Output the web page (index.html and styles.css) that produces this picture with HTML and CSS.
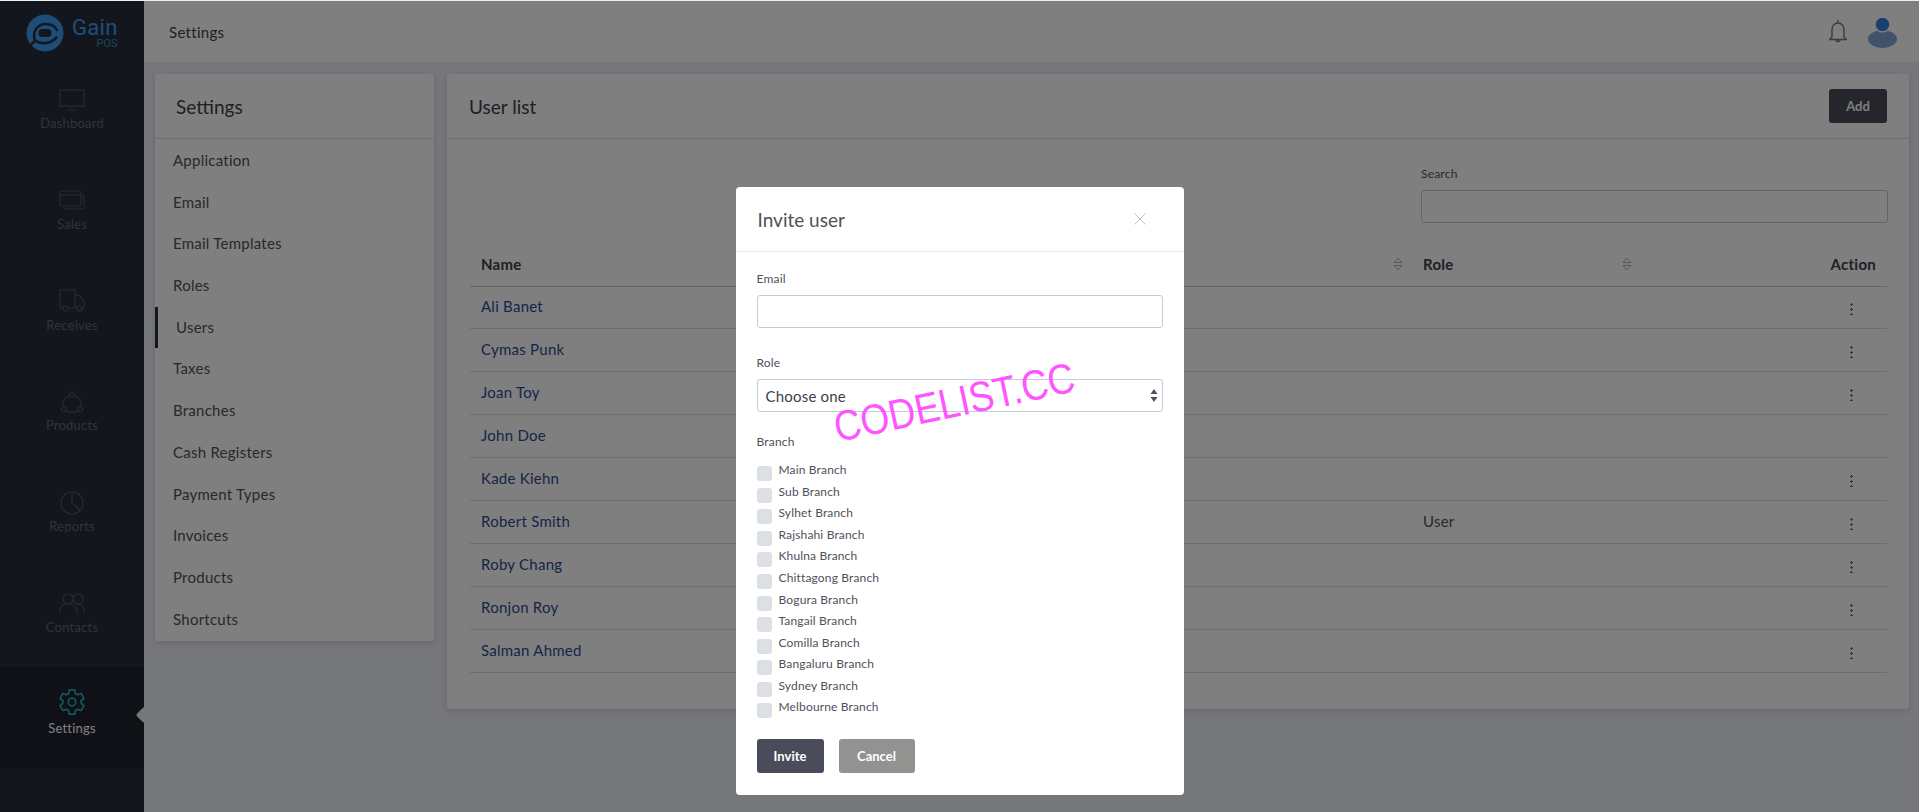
FILE: index.html
```html
<!DOCTYPE html>
<html lang="en">
<head>
<meta charset="utf-8">
<title>Settings - Gain POS</title>
<link rel="stylesheet" href="styles.css">
</head>
<body>
<div class="app">
  <aside class="sidebar">
    <div class="brand">
      <svg class="brand-mark" viewBox="0 0 38 38"><circle cx="19" cy="19" r="18.500" fill="#3c9cf0"/><path class="logo-gap" d="M3 33l6-6.500C5.500 17 12 10 20 10c5.500 0 9.500 2.500 11.500 7M9 26.500c5 4 17 4 22-4"/><rect x="12.500" y="15" width="13" height="8" rx="4" fill="#282c3a"/></svg>
      <div class="brand-text"><span class="brand-name">Gain</span><span class="brand-sub">POS</span></div>
    </div>
    <nav class="nav">
      <a class="nav-item"><svg class="nav-icon" viewBox="0 0 26 26"><rect x="1" y="3" width="24" height="16"/><path d="M13 19v3M7 23h12"/></svg><span>Dashboard</span></a>
      <a class="nav-item"><svg class="nav-icon" viewBox="0 0 26 26"><rect x="1" y="3" width="21" height="15" rx="2"/><path d="M1 7h21M22 7h1a2 2 0 0 1 2 2v10a2 2 0 0 1-2 2H7a2 2 0 0 1-2-2v-1"/></svg><span>Sales</span></a>
      <a class="nav-item"><svg class="nav-icon" viewBox="0 0 26 26"><path d="M4 19H1V1h15v18H9M16 6h4l5 6v7h-2M16 19h2"/><circle cx="6.500" cy="19.500" r="2.500"/><circle cx="20.500" cy="19.500" r="2.500"/></svg><span>Receives</span></a>
      <a class="nav-item"><svg class="nav-icon" viewBox="0 0 26 26"><circle cx="13" cy="5.500" r="2.500"/><circle cx="5" cy="20" r="2.500"/><circle cx="21" cy="20" r="2.500"/><path d="M10.500 6.500a10 10 0 0 0-6.500 11M15.500 6.500a10 10 0 0 1 6.500 11M7.500 21.500a10 10 0 0 0 11 0"/></svg><span>Products</span></a>
      <a class="nav-item"><svg class="nav-icon" viewBox="0 0 26 26"><circle cx="13" cy="13" r="11"/><path d="M13 2v11l8 7"/></svg><span>Reports</span></a>
      <a class="nav-item"><svg class="nav-icon" viewBox="0 0 26 26"><circle cx="9" cy="8" r="5"/><circle cx="19" cy="8" r="5"/><path d="M0 22c0-6 4-9 9-9s9 3 9 9M17 13c5 0 9 3 9 9"/></svg><span>Contacts</span></a>
      <a class="nav-item nav-active"><svg class="nav-icon gear" viewBox="0 0 24 24"><circle cx="12" cy="12" r="3.500"/><polygon points="8.820,4.120 9.410,.8 14.590,.8 15.180,4.120 17.230,5.300 20.410,4.160 23,8.640 20.420,10.820 20.420,13.180 23,15.360 20.410,19.840 17.230,18.700 15.180,19.880 14.590,23.200 9.410,23.200 8.820,19.880 6.770,18.700 3.590,19.840 1,15.360 3.580,13.180 3.580,10.820 1,8.640 3.590,4.160 6.770,5.300"/></svg><span>Settings</span></a>
    </nav>
  </aside>
  <div class="main">
    <header class="topbar">
      <span class="topbar-title">Settings</span>
      <div class="topbar-actions">
        <svg class="bell" viewBox="0 0 18 24"><path d="M9 0v2.500M3 17V9a6 6 0 0 1 12 0v8l2.500 2.500H.5L3 17zM7 19.500a2 2 0 0 0 4 0"/></svg>
        <svg class="avatar" viewBox="0 0 29 30"><ellipse cx="14.500" cy="21" rx="14.500" ry="9" fill="#82a4d8"/><circle cx="14.500" cy="6.500" r="7.500" fill="#3a7ce0" stroke="#fff" stroke-width="1.500"/></svg>
      </div>
    </header>
    <div class="content">
      <section class="card side-card">
        <h2 class="card-title side-title">Settings</h2>
        <ul class="menu">
          <li>Application</li><li>Email</li><li>Email Templates</li><li>Roles</li>
          <li class="menu-active">Users</li><li>Taxes</li><li>Branches</li><li>Cash Registers</li>
          <li>Payment Types</li><li>Invoices</li><li>Products</li><li>Shortcuts</li>
        </ul>
      </section>
      <section class="card list-card">
        <div class="list-head">
          <h2 class="card-title">User list</h2>
          <button class="btn btn-dark">Add</button>
        </div>
        <div class="list-body">
          <div class="search">
            <label class="label">Search</label>
            <div class="input"></div>
          </div>
          <table class="table">
            <colgroup><col class="c-name"><col class="c-mail"><col class="c-role"><col></colgroup>
            <thead>
              <tr>
                <th>Name</th>
                <th class="sort"><svg class="sort-icon" viewBox="0 0 10 14"><path d="M1 5.500 5 1l4 4.500zM1 8.500 5 13l4-4.500z"/></svg></th>
                <th class="sort">Role<svg class="sort-icon" viewBox="0 0 10 14"><path d="M1 5.500 5 1l4 4.500zM1 8.500 5 13l4-4.500z"/></svg></th>
                <th class="right">Action</th>
              </tr>
            </thead>
            <tbody>
              <tr><td class="link">Ali Banet</td><td></td><td></td><td class="kebab"><i></i></td></tr>
              <tr><td class="link">Cymas Punk</td><td></td><td></td><td class="kebab"><i></i></td></tr>
              <tr><td class="link">Joan Toy</td><td></td><td></td><td class="kebab"><i></i></td></tr>
              <tr><td class="link">John Doe</td><td></td><td></td><td></td></tr>
              <tr><td class="link">Kade Kiehn</td><td></td><td></td><td class="kebab"><i></i></td></tr>
              <tr><td class="link">Robert Smith</td><td></td><td>User</td><td class="kebab"><i></i></td></tr>
              <tr><td class="link">Roby Chang</td><td></td><td></td><td class="kebab"><i></i></td></tr>
              <tr><td class="link">Ronjon Roy</td><td></td><td></td><td class="kebab"><i></i></td></tr>
              <tr><td class="link">Salman Ahmed</td><td></td><td></td><td class="kebab"><i></i></td></tr>
            </tbody>
          </table>
        </div>
      </section>
    </div>
  </div>
</div>
<div class="overlay">
  <div class="modal">
    <div class="modal-head">
      <h3 class="modal-title">Invite user</h3>
      <svg class="close" viewBox="0 0 12 12"><path d="M.5.500l11 11M11.500.500l-11 11"/></svg>
    </div>
    <div class="modal-body">
      <label class="label">Email</label>
      <div class="input field"></div>
      <label class="label">Role</label>
      <div class="input field select">Choose one<svg class="caret" viewBox="0 0 8 13"><path d="M4 0l3.500 5H.5zM4 13 .5 8h7z"/></svg></div>
      <label class="label">Branch</label>
      <ul class="checks">
        <li><i class="box"></i>Main Branch</li>
        <li><i class="box"></i>Sub Branch</li>
        <li><i class="box"></i>Sylhet Branch</li>
        <li><i class="box"></i>Rajshahi Branch</li>
        <li><i class="box"></i>Khulna Branch</li>
        <li><i class="box"></i>Chittagong Branch</li>
        <li><i class="box"></i>Bogura Branch</li>
        <li><i class="box"></i>Tangail Branch</li>
        <li><i class="box"></i>Comilla Branch</li>
        <li><i class="box"></i>Bangaluru Branch</li>
        <li><i class="box"></i>Sydney Branch</li>
        <li><i class="box"></i>Melbourne Branch</li>
      </ul>
      <div class="actions">
        <button class="btn btn-invite">Invite</button>
        <button class="btn btn-cancel">Cancel</button>
      </div>
    </div>
  </div>
</div>
<div class="watermark">CODELIST.CC</div>
</body>
</html>
```
FILE: styles.css
```css
* { box-sizing: border-box; }
html, body { margin: 0; height: 100%; overflow: hidden; }
body { background: #eceef6; font-family: Lato, "Open Sans", sans-serif; color: #50505a; font-size: 14px; padding-top: 1px; }
ul { list-style: none; margin: 0; padding: 0; }
h2, h3 { margin: 0; font-weight: 400; }

.app { display: flex; height: 811px; }
.sidebar { width: 144px; flex: none; background: #282c3a; }
.brand { height: 61px; display: flex; align-items: center; padding: 4px 0 0 26px; gap: 8px; border-bottom: 1px solid #262a37; }
.brand-mark { width: 38px; height: 38px; }
.logo-gap { fill: none; stroke: #282c3a; stroke-width: 2.500; }
.brand-text { display: flex; flex-direction: column; align-items: flex-end; color: #3c9cf0; font-family: Roboto, sans-serif; }
.brand-name { font-size: 22px; line-height: 22px; letter-spacing: .3px; }
.brand-sub { font-size: 11px; line-height: 10px; color: #2a9aa6; }
.nav-item { height: 100.8px; display: flex; flex-direction: column; align-items: center; padding-top: 25px; color: #62657a; font-size: 13px; letter-spacing: .2px; }
.nav-icon { width: 26px; height: 26px; fill: none; stroke: #50536a; stroke-width: 1.2; margin-bottom: 2px; }
.nav-active { background: #20232f; color: #fff; position: relative; }
.nav-active .nav-icon { stroke: #2ab0bc; stroke-width: 1.500; }
.nav-active .gear { margin-top: -3px; margin-bottom: 5px; stroke-linejoin: round; }
.nav-active::after { content: ""; position: absolute; right: -6px; top: 42px; width: 12px; height: 12px; border-radius: 3px; background: #eceef6; transform: rotate(45deg); }

.main { flex: 1; min-width: 0; display: flex; flex-direction: column; }
.topbar { height: 61px; flex: none; background: #fff; display: flex; align-items: center; justify-content: space-between; padding: 0 22px 0 25px; }
.topbar-title { font-size: 15px; color: #404048; letter-spacing: .3px; }
.topbar-actions { display: flex; align-items: center; gap: 21px; }
.bell { width: 18px; height: 24px; fill: none; stroke: #787880; stroke-width: 1.400; }
.avatar { width: 29px; height: 30px; margin-top: 3px; }

.content { flex: 1; display: flex; align-items: flex-start; padding: 12px 10px 0 11px; gap: 13px; }
.card { background: #fff; border-radius: 3px; box-shadow: 0 2px 6px rgba(0,0,0,.12); }
.side-card { width: 279px; flex: none; height: 567px; }
.card-title { font-size: 19px; color: #40404a; line-height: 66px; height: 65px; }
.side-title { padding-left: 21px; border-bottom: 1px solid #dcdde2; }
.menu { padding-top: 1px; }
.menu li { height: 41.700px; line-height: 41.700px; padding-left: 18px; font-size: 15px; color: #50505a; letter-spacing: .25px; }
.menu .menu-active { border-left: 3px solid #282c3a; padding-left: 18px; }

.list-card { flex: 1; height: 635px; }
.list-head { height: 65px; display: flex; align-items: center; justify-content: space-between; padding: 0 22px; border-bottom: 1px solid #dcdde2; }
.list-body { padding: 27px 22px 0 23px; }
.search { width: 467px; margin-left: auto; margin-right: -1px; }
.label { display: block; font-size: 12px; line-height: 16px; color: #50505a; letter-spacing: .2px; }
.input { height: 33px; border: 1px solid #c6cad6; border-radius: 3px; background: #fff; }
.search .label { margin-bottom: 8px; }

.table { width: 100%; border-collapse: collapse; table-layout: fixed; margin-top: 19px; font-size: 15px; letter-spacing: .25px; }
.c-name { width: 470px; }
.c-mail { width: 472px; }
.c-role { width: 229px; }
.table th { height: 44px; padding: 0 11px; text-align: left; font-weight: 700; color: #40404a; border-bottom: 1px solid #c6cad6; }
.table td { height: 42.900px; padding: 0 11px 2px; border-bottom: 1px solid #dcdde2; color: #50505a; }
.table .sort { position: relative; }
.sort-icon { position: absolute; right: 9px; top: 15px; width: 10px; height: 14px; fill: none; stroke: #b0b2bc; }
.table .right { text-align: right; }
.table .link { color: #2f4a94; }
.kebab i { display: block; width: 3px; height: 13px; margin: 5px 0 0 198px; background: radial-gradient(circle, #6a6d7c 1px, transparent 1.300px) 0 0 / 3px 5px; }

.btn { border: 0; border-radius: 3px; font: 700 13px Lato, sans-serif; color: #fff; height: 34px; }
.btn-dark { width: 58px; background: #4a4c56; }

.overlay { position: fixed; inset: 1px 0 0 0; background: rgba(0,0,0,.5); display: flex; justify-content: center; align-items: flex-start; padding-top: 186px; }
.modal { width: 448px; height: 608px; background: #fff; border-radius: 4px; }
.modal-head { height: 65px; display: flex; align-items: center; justify-content: space-between; padding: 0 38px 0 22px; border-bottom: 1px solid #e6e8ec; }
.modal-title { font-size: 19px; color: #50505a; }
.close { width: 12px; height: 12px; fill: none; stroke: #c0c2c8; stroke-width: 1; }
.modal-body { padding: 19px 21px 0; }
.modal .label { margin-bottom: 8px; }
.field { margin-bottom: 27px; }
.select { display: flex; align-items: center; justify-content: space-between; padding: 0 4px 0 8px; font-size: 15px; color: #40404a; margin-bottom: 22px; letter-spacing: .2px; }
.caret { width: 8px; height: 13px; fill: #50505a; }
.checks { margin-top: 9px; }
.checks li { display: flex; align-items: center; gap: 7px; height: 21.550px; font-size: 12px; color: #50505a; letter-spacing: .15px; }
.box { width: 15px; height: 15px; border-radius: 3px; background: #dce0e5; flex: none; position: relative; top: 4px; }
.actions { display: flex; gap: 15px; margin-top: 21px; }
.btn-invite { width: 67px; background: #4a4c5c; }
.btn-cancel { width: 76px; background: #929291; }

.watermark { position: fixed; left: 832px; top: 382px; font: 37px "Liberation Sans", Arial, sans-serif; color: #ff55ff; transform: rotate(-12deg) scale(1, 1.15); white-space: nowrap; }
```
